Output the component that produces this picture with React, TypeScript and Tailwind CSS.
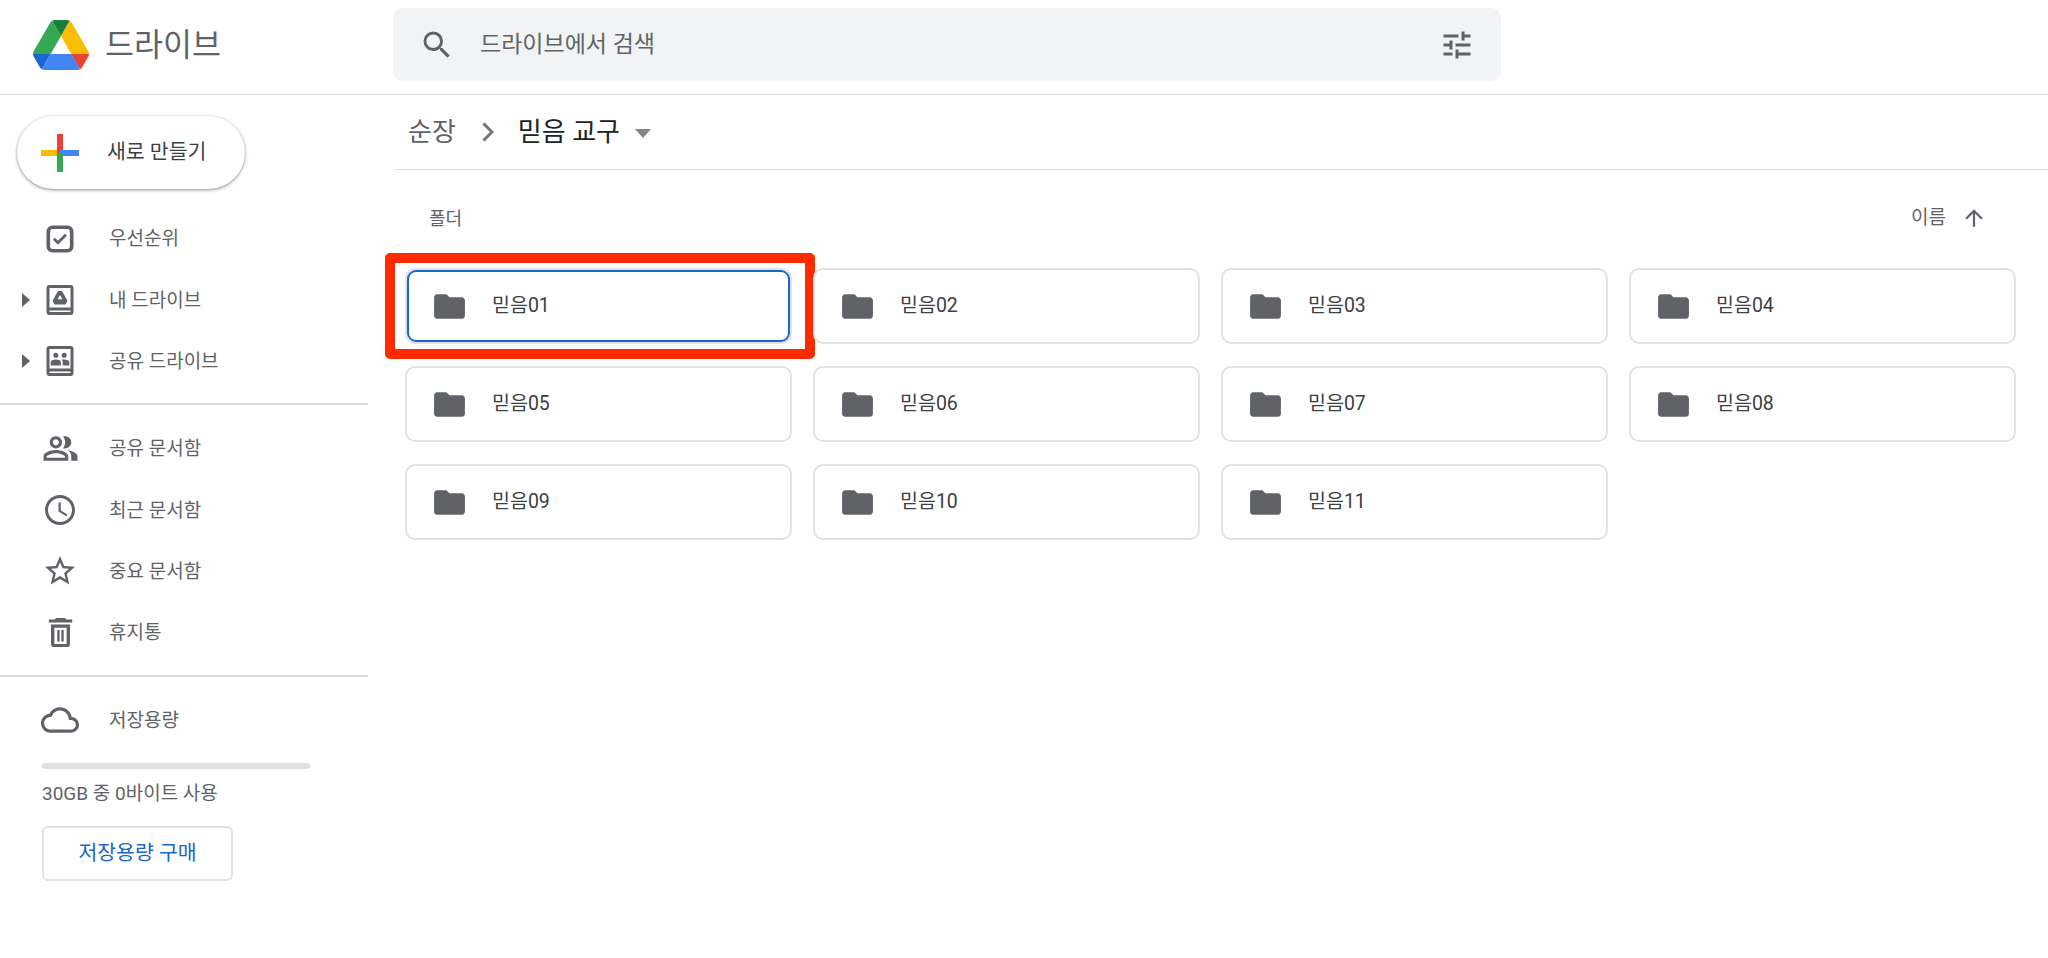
const FONT = "font-['Roboto','Noto_Sans_CJK_KR',sans-serif]";

function Icon({ d, size = 32, className = "" }: { d: string; size?: number; className?: string }) {
  return (
    <svg width={size} height={size} viewBox="0 0 24 24" fill="currentColor" className={className}>
      <path d={d} />
    </svg>
  );
}

const icons = {
  search:
    "M15.5 14h-.79l-.28-.27A6.471 6.471 0 0 0 16 9.5 6.5 6.5 0 1 0 9.5 16c1.61 0 3.09-.59 4.23-1.57l.27.28v.79l5 4.99L20.49 19l-4.99-5zm-6 0C7.01 14 5 11.99 5 9.5S7.01 5 9.5 5 14 7.01 14 9.5 11.99 14 9.5 14z",
  tune: "M3 17v2h6v-2H3zM3 5v2h10V5H3zm10 16v-2h8v-2h-8v-2h-2v6h2zM7 9v2H3v2h4v2h2V9H7zm14 4v-2H11v2h10zm-6-4h2V7h4V5h-4V3h-2v6z",
  priority:
    "M7 3h10a4 4 0 0 1 4 4v10a4 4 0 0 1-4 4H7a4 4 0 0 1-4-4V7a4 4 0 0 1 4-4zM7 5.400a1.600 1.600 0 0 0-1.600 1.600v10a1.600 1.600 0 0 0 1.600 1.600h10a1.600 1.600 0 0 0 1.600-1.600V7a1.600 1.600 0 0 0-1.600-1.600zM10.600 13.200l-2-2-1.300 1.300 3.300 3.300 6-6-1.300-1.300z",
  myDrive:
    "M5 2h14a2 2 0 0 1 2 2v16a2 2 0 0 1-2 2H5a2 2 0 0 1-2-2V4a2 2 0 0 1 2-2zm0 2v13h14V4H5zm0 15v1h14v-1H5zM10.700 6h2.600l3.700 6.500-1.300 2.500H8.300L7 12.500 10.700 6zm1.300 2.600-1.600 2.900h3.200L12 8.600z",
  sharedDrive:
    "M5 2h14a2 2 0 0 1 2 2v16a2 2 0 0 1-2 2H5a2 2 0 0 1-2-2V4a2 2 0 0 1 2-2zm0 2v13h14V4H5zm0 15v1h14v-1H5zM9.200 6.500a1.700 1.700 0 1 1 0 3.400 1.700 1.700 0 0 1 0-3.400zm5.600 0a1.700 1.700 0 1 1 0 3.400 1.700 1.700 0 0 1 0-3.400zM9.200 11c1.600 0 3.400.7 3.400 1.800V15H5.800v-2.200c0-1.100 1.800-1.800 3.400-1.800zm5.600 0c1.600 0 3.400.7 3.400 1.800V15h-4.400v-2.200c0-.7-.3-1.200-.8-1.600.5-.1 1.200-.2 1.800-.2z",
  people:
    "M16.67 13.13C18.04 14.06 19 15.32 19 17v3h4v-3c0-2.18-3.57-3.47-6.33-3.87zM15 12c2.21 0 4-1.79 4-4s-1.79-4-4-4c-.47 0-.91.1-1.33.24C14.5 5.27 15 6.58 15 8s-.5 2.73-1.33 3.76c.42.14.86.24 1.33.24zM9 12c2.21 0 4-1.79 4-4s-1.79-4-4-4-4 1.79-4 4 1.79 4 4 4zm0-6c1.100 0 2 .9 2 2s-.9 2-2 2-2-.9-2-2 .9-2 2-2zM9 13c-2.670 0-8 1.340-8 4v3h16v-3c0-2.660-5.330-4-8-4zm6 5H3v-.99C3.200 16.290 6.300 15 9 15s5.800 1.290 6 2v1z",
  clock:
    "M11.990 2C6.470 2 2 6.480 2 12s4.470 10 9.990 10C17.520 22 22 17.520 22 12S17.520 2 11.990 2zM12 20c-4.420 0-8-3.580-8-8s3.580-8 8-8 8 3.580 8 8-3.580 8-8 8zm.5-13H11v6l5.250 3.150.75-1.230-4.500-2.670z",
  star: "M22 9.240l-7.190-.62L12 2 9.190 8.630 2 9.240l5.460 4.730L5.820 21 12 17.270 18.180 21l-1.630-7.030L22 9.240zM12 15.400l-3.760 2.270 1-4.280-3.320-2.880 4.380-.38L12 6.100l1.710 4.040 4.380.38-3.320 2.880 1 4.280L12 15.400z",
  trash:
    "M15 2H9L8 3H4v2.200h16V3h-4l-1-1zM18.500 6.500h-13V20c0 1.100.9 2 2 2h9c1.100 0 2-.9 2-2V6.500zM16.200 19.800H7.800V8.700h8.400v11.100zM9.800 10.300h1.600v7.800H9.800zM12.600 10.300h1.600v7.800h-1.600z",
  cloud:
    "M19.350 10.040C18.670 6.590 15.640 4 12 4 9.110 4 6.600 5.640 5.350 8.040 2.340 8.360 0 10.910 0 14c0 3.310 2.690 6 6 6h13c2.760 0 5-2.240 5-5 0-2.640-2.050-4.780-4.650-4.960zM19 18H6c-2.210 0-4-1.790-4-4 0-2.050 1.530-3.760 3.560-3.970l1.070-.11.5-.95C8.080 7.140 9.940 6 12 6c2.620 0 4.880 1.860 5.390 4.430l.3 1.500 1.530.11c1.560.1 2.780 1.410 2.780 2.960 0 1.650-1.350 3-3 3z",
  folder: "M10 4H4c-1.100 0-1.990.9-1.990 2L2 18c0 1.100.9 2 2 2h16c1.100 0 2-.9 2-2V8c0-1.100-.9-2-2-2h-8l-2-2z",
  arrowUp: "M4 12l1.410 1.410L11 7.830V20h2V7.830l5.580 5.590L20 12l-8-8-8 8z",
};

function DriveLogo() {
  return (
    <svg width="56" height="50" viewBox="0 0 87.3 78">
      <path d="m6.6 66.85 3.85 6.65c.8 1.4 1.95 2.5 3.3 3.3l13.75-23.8h-27.5c0 1.55.4 3.1 1.2 4.5z" fill="#1967d2" />
      <path d="m43.65 25-13.75-23.8c-1.35.8-2.5 1.9-3.3 3.3l-25.4 44a9.06 9.06 0 0 0 -1.2 4.5h27.5z" fill="#34a853" />
      <path d="m73.55 76.8c1.35-.8 2.5-1.9 3.3-3.3l1.6-2.75 7.65-13.25c.8-1.4 1.2-2.95 1.2-4.5h-27.502l5.852 11.5z" fill="#ea4335" />
      <path d="m43.65 25 13.75-23.8c-1.35-.8-2.9-1.2-4.5-1.2h-18.5c-1.6 0-3.15.45-4.5 1.2z" fill="#188038" />
      <path d="m59.8 53h-32.3l-13.75 23.8c1.35.8 2.9 1.2 4.5 1.2h50.8c1.6 0 3.15-.45 4.5-1.2z" fill="#4285f4" />
      <path d="m73.4 26.5-12.7-22c-.8-1.4-1.95-2.5-3.3-3.3l-13.75 23.8 16.15 28h27.45c0-1.55-.4-3.1-1.2-4.5z" fill="#fbbc04" />
    </svg>
  );
}

function PlusLogo() {
  return (
    <svg width="38" height="38" viewBox="0 0 38 38">
      <rect x="0" y="16" width="19" height="6" fill="#fbbc04" />
      <rect x="16" y="0" width="6" height="19" fill="#ea4335" />
      <rect x="19" y="16" width="19" height="6" fill="#4285f4" />
      <rect x="16" y="19" width="6" height="19" fill="#34a853" />
    </svg>
  );
}

function NavRow({ icon, label, arrow, size = 36 }: { icon: string; label: string; arrow?: boolean; size?: number }) {
  return (
    <div className="flex h-[61.4px] items-center">
      <div className="flex w-[40px] justify-end pr-[10px]">
        {arrow && (
          <svg width="8" height="14" viewBox="0 0 8 14" fill="#5f6368">
            <path d="M0 0l8 7-8 7z" />
          </svg>
        )}
      </div>
      <div className="flex w-[40px] justify-center text-[#5f6368]">
        <Icon d={icon} size={size} />
      </div>
      <span className="ml-[29px] pt-[2px] text-[19px] text-[#5f6368]">{label}</span>
    </div>
  );
}

function Sidebar() {
  return (
    <aside className="w-[368px] shrink-0">
      <div className="pl-[17px] pt-[21px]">
        <button className="flex h-[73px] w-[228px] items-center rounded-full bg-white pl-[24px] shadow-[0_1px_3px_1px_rgba(60,64,67,0.25),0_1px_2px_rgba(60,64,67,0.3)]">
          <PlusLogo />
          <span className="ml-[28px] text-[20.5px] text-[#3c4043]">새로 만들기</span>
        </button>
      </div>
      <div className="mt-[19px]">
        <NavRow icon={icons.priority} label="우선순위" />
        <NavRow icon={icons.myDrive} label="내 드라이브" arrow />
        <NavRow icon={icons.sharedDrive} label="공유 드라이브" arrow />
      </div>
      <div className="mb-[13px] mt-[11px] h-[1.5px] bg-[#dadce0]" />
      <div>
        <NavRow icon={icons.people} label="공유 문서함" size={37} />
        <NavRow icon={icons.clock} label="최근 문서함" />
        <NavRow icon={icons.star} label="중요 문서함" />
        <NavRow icon={icons.trash} label="휴지통" size={35} />
      </div>
      <div className="mb-[13px] mt-[12px] h-[1.5px] bg-[#dadce0]" />
      <NavRow icon={icons.cloud} label="저장용량" size={38} />
      <div className="pl-[42px]">
        <div className="mt-[12px] h-[6px] w-[268px] rounded-full bg-[#e0e0e0]" />
        <p className="mt-[13px] text-[19px] leading-[24px] text-[#5f6368]">30GB 중 0바이트 사용</p>
        <button className="mt-[20px] h-[55px] w-[191px] rounded-[6px] border-2 border-[#e0e2e5] text-[20.5px] text-[#1a66c9]">
          저장용량 구매
        </button>
      </div>
    </aside>
  );
}

function FolderCard({ name, selected }: { name: string; selected?: boolean }) {
  return (
    <div className="relative h-[76px]">
      <div className="flex h-full items-center rounded-[10px] border-2 border-[#e0e2e5] pl-[24px]">
        <Icon d={icons.folder} size={37} className="shrink-0 text-[#5f6368]" />
        <span className="ml-[24px] text-[19.5px] text-[#3c4043]">{name}</span>
      </div>
      {selected && (
        <>
          <div className="absolute inset-[2px] rounded-[9px] border-2 border-[#1a66c9]" />
          <div className="absolute bottom-[-15px] left-[-20px] right-[-23px] top-[-15px] rounded-[5px] border-[10px] border-[#ff2a00]" />
        </>
      )}
    </div>
  );
}

const folders = ["믿음01", "믿음02", "믿음03", "믿음04", "믿음05", "믿음06", "믿음07", "믿음08", "믿음09", "믿음10", "믿음11"];

export default function App() {
  return (
    <div className={`h-[958px] w-[2048px] overflow-hidden bg-white ${FONT}`}>
      <header className="flex h-[95px] items-center border-b-[1.5px] border-[#dadce0]">
        <div className="flex w-[393px] shrink-0 items-center pb-[4px] pl-[33px]">
          <DriveLogo />
          <span className="ml-[16px] pt-[2px] text-[31.5px] leading-none text-[#5f6368]">드라이브</span>
        </div>
        <div className="mb-[5px] flex h-[73px] w-[1108px] items-center rounded-[10px] bg-[#f1f3f4] pl-[26px] pr-[26px]">
          <Icon d={icons.search} size={36} className="text-[#5f6368]" />
          <span className="ml-[25px] pt-[2px] text-[23px] text-[#5f6368]">드라이브에서 검색</span>
          <Icon d={icons.tune} size={36} className="ml-auto text-[#5f6368]" />
        </div>
      </header>
      <div className="flex">
        <Sidebar />
        <main className="ml-[26px] flex-1">
          <div className="flex h-[75px] items-center border-b-[1.5px] border-[#dadce0] pl-[14px]">
            <span className="text-[26px] text-[#5f6368]">순장</span>
            <svg width="12" height="20" viewBox="0 0 12 20" className="ml-[26px]" fill="none" stroke="#757575" strokeWidth="3">
              <path d="M1.5 1.5 10 10l-8.500 8.500" />
            </svg>
            <span className="ml-[24px] text-[26px] text-[#202124]">믿음 교구</span>
            <svg width="16" height="9" viewBox="0 0 16 9" className="ml-[15px] mt-[2px]" fill="#80868b">
              <path d="M0 0h16L8 9z" />
            </svg>
          </div>
          <div className="flex h-[98px] items-center pb-[2px] pl-[35px] pr-[61px]">
            <span className="text-[18px] text-[#5f6368]">폴더</span>
            <span className="ml-auto text-[19px] text-[#5f6368]">이름</span>
            <Icon d={icons.arrowUp} size={26} className="ml-[15px] text-[#5f6368]" />
          </div>
          <div className="ml-[11px] grid w-[1611px] grid-cols-4 gap-x-[21px] gap-y-[22px]">
            {folders.map((name, i) => (
              <FolderCard key={name} name={name} selected={i === 0} />
            ))}
          </div>
        </main>
      </div>
    </div>
  );
}
